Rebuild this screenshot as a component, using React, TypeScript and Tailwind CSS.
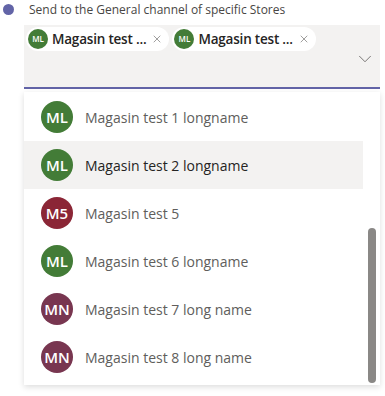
import { ChevronDown, X } from 'lucide-react';

type Store = { initials: string; name: string; color: string };

const stores: Store[] = [
  { initials: 'ML', name: 'Magasin test 1 longname', color: 'bg-[#437c37]' },
  { initials: 'ML', name: 'Magasin test 2 longname', color: 'bg-[#437c37]' },
  { initials: 'M5', name: 'Magasin test 5', color: 'bg-[#8b2636]' },
  { initials: 'ML', name: 'Magasin test 6 longname', color: 'bg-[#437c37]' },
  { initials: 'MN', name: 'Magasin test 7 long name', color: 'bg-[#783650]' },
  { initials: 'MN', name: 'Magasin test 8 long name', color: 'bg-[#783650]' },
];

function Chip({ label }: { label: string }) {
  return (
    <div className="flex h-[24px] items-center rounded-full bg-white pl-[2px] pr-[6px]">
      <div className="flex h-[20px] w-[20px] items-center justify-center rounded-full bg-[#437c37] text-[8px] font-semibold text-white">
        ML
      </div>
      <span className="ml-[4px] text-[13.5px] font-semibold tracking-[-0.2px] text-[#252423]">{label}</span>
      <X className="ml-[5px] h-[12px] w-[12px] text-[#605e5c]" strokeWidth={1.2} />
    </div>
  );
}

export default function App() {
  return (
    <div className="h-[396px] w-[385px] overflow-hidden bg-white font-['Segoe_UI','Open_Sans',sans-serif]">
      <div className="flex h-[19px] items-center">
        <div className="ml-[3px] h-[11px] w-[11px] rounded-full bg-[#6264a7]" />
        <span className="ml-[15px] text-[12px] text-[#484644]">
          Send to the General channel of specific Stores
        </span>
      </div>

      <div className="ml-[24px] mr-[5px] mt-[6px] flex h-[64px] items-start border-b-2 border-[#6264a7] bg-[#f3f2f1] pl-[2px] pr-[4px] pt-[2px]">
        <div className="flex gap-[3px]">
          <Chip label="Magasin test ..." />
          <Chip label="Magasin test ..." />
        </div>
        <ChevronDown className="ml-auto mt-[21px] h-[22px] w-[22px] text-[#605e5c]" strokeWidth={0.9} />
      </div>

      <div className="relative ml-[24px] mr-[5px] mt-[3px] h-[293px] bg-white pt-[1px] shadow-[0_2px_6px_rgba(0,0,0,0.14)]">
        {stores.map((s, i) => (
          <div
            key={i}
            className={`mr-[17px] flex h-[48px] items-center pl-[17px] ${i === 1 ? 'bg-[#f3f2f1]' : ''}`}
          >
            <div
              className={`flex h-[32px] w-[32px] items-center justify-center rounded-full text-[15px] font-semibold text-white ${s.color}`}
            >
              {s.initials}
            </div>
            <span className={`ml-[12px] text-[14px] ${i === 1 ? 'text-[#252423]' : 'text-[#605e5c]'}`}>
              {s.name}
            </span>
          </div>
        ))}
        <div className="absolute right-[4px] top-[136px] h-[155px] w-[8px] rounded-full bg-[#8a8886]" />
      </div>
    </div>
  );
}
